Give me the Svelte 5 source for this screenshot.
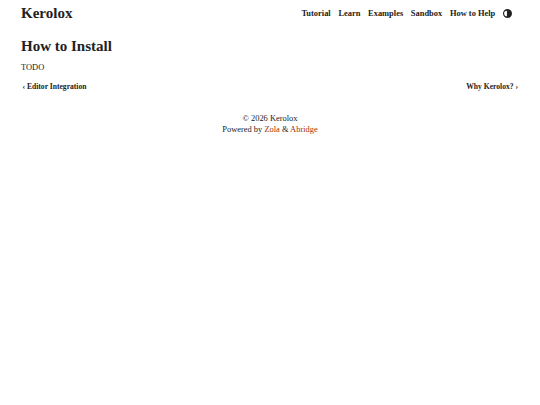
<script>
  const links = ["Tutorial", "Learn", "Examples", "Sandbox", "How to Help"];
</script>

<div class="page">
  <header>
    <a class="logo" href="#home">Kerolox</a>
    <nav>
      {#each links as link}
        <a href="#{link}">{link}</a>
      {/each}
      <svg class="mode" viewBox="0 0 16 16" width="9" height="9">
        <path d="M8 0a8 8 0 1 0 0 16A8 8 0 0 0 8 0zM7 3v10a5 5 0 0 1 0-10z" />
      </svg>
    </nav>
  </header>

  <main>
    <h1>How to Install</h1>
    <p>TODO</p>
    <div class="pager">
      <a href="#prev">‹ Editor Integration</a>
      <a href="#next">Why Kerolox? ›</a>
    </div>
  </main>

  <footer>
    <div>© 2026 Kerolox</div>
    <div>Powered by <a href="#zola">Zola</a> &amp; <a href="#abridge">Abridge</a></div>
  </footer>
</div>

<style>
  :global(body) {
    margin: 0;
    background: #fff;
  }

  .page {
    padding: 0 21px;
    font-family: "Liberation Serif", "Times New Roman", serif;
    font-size: 8.44px;
    line-height: 11px;
    color: #222;
  }

  a {
    color: inherit;
    text-decoration: none;
  }

  header {
    display: flex;
    justify-content: space-between;
    align-items: center;
    height: 26px;
  }

  .logo {
    font-size: 15px;
    font-weight: bold;
  }

  nav {
    display: flex;
    align-items: center;
    gap: 7.7px;
    font-weight: bold;
  }

  .mode {
    fill: #222;
    margin-right: 7px;
  }

  h1 {
    margin: 13px 0 0;
    font-size: 15px;
    line-height: 15px;
  }

  p {
    margin: 8px 0 0;
  }

  .pager {
    display: flex;
    justify-content: space-between;
    margin-top: 8px;
    padding: 0 1px 0 1.5px;
    font-size: 7.6px;
    font-weight: bold;
  }

  footer {
    margin-top: 21px;
    text-align: center;
  }

  footer a {
    color: #a82c00;
  }
</style>
